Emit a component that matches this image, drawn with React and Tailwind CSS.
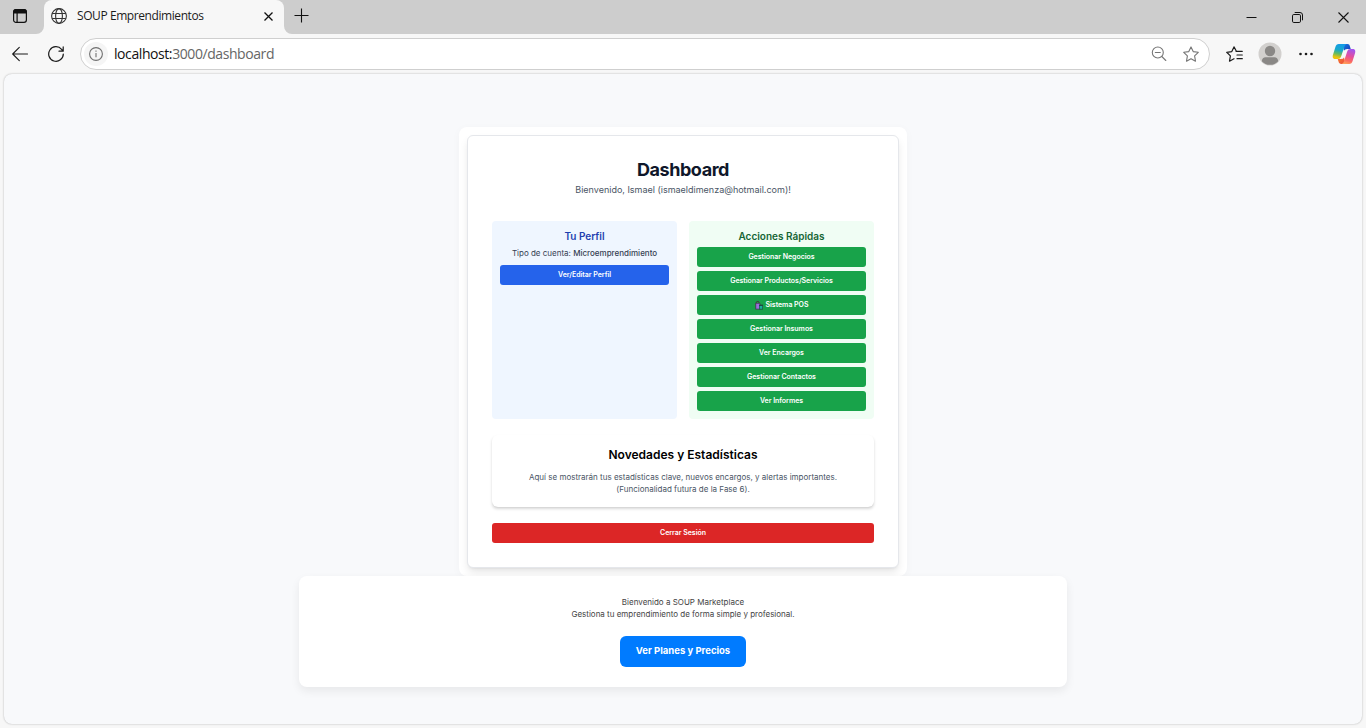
const UI = "font-['Open_Sans','Noto_Sans',sans-serif]";

function TabStrip() {
  return (
    <div className={`flex h-[34px] items-end bg-[#cdcdcd] ${UI}`}>
      <div className="flex h-[34px] w-11 items-center justify-center rounded-br-lg bg-[#cdcdcd]">
        <svg className="-ml-1 -mt-0.5" width="16" height="16" viewBox="0 0 16 16" fill="none" stroke="#111" strokeWidth="1.2">
          <rect x="1.6" y="1.6" width="12.8" height="12.8" rx="2.4" />
          <path d="M1.6 5V4a2.4 2.4 0 0 1 2.4-2.4h8A2.4 2.4 0 0 1 14.4 4v1z" fill="#111" />
          <path d="M5.1 5v9.4" />
        </svg>
      </div>
      <div className="relative flex h-[34px] w-60 items-center rounded-t-lg bg-[#f7f7f7] pl-[7px] pr-[10px]">
        <svg className="absolute -left-2 bottom-0" width="8" height="8" viewBox="0 0 8 8"><path d="M8 0v8H0a8 8 0 0 0 8-8z" fill="#f7f7f7" /></svg>
        <svg className="absolute -right-2 bottom-0" width="8" height="8" viewBox="0 0 8 8"><path d="M0 0v8h8a8 8 0 0 1-8-8z" fill="#f7f7f7" /></svg>
        <svg className="-mt-0.5" width="16" height="16" viewBox="0 0 16 16" fill="none" stroke="#333" strokeWidth="1.100">
          <circle cx="8" cy="8" r="7.4" />
          <ellipse cx="8" cy="8" rx="3.4" ry="7.4" />
          <path d="M1.2 5.5h13.6M1.2 10.5h13.6" />
        </svg>
        <span className="ml-[10px] -mt-[3px] whitespace-nowrap text-[12px] leading-4 tracking-[-0.42px] text-[#1b1b1b]">SOUP Emprendimientos</span>
        <svg className="-mt-px ml-auto" width="11" height="11" viewBox="0 0 11 11" fill="none" stroke="#111" strokeWidth="1.3"><path d="M1.5 1.5l8 8M9.500 1.500l-8 8" /></svg>
      </div>
      <svg className="mb-[11px] ml-[10px]" width="15" height="15" viewBox="0 0 15 15" fill="none" stroke="#111" strokeWidth="1.1"><path d="M7.5 .5v14M.5 7.500h14" /></svg>
      <div className="ml-auto flex h-[33px]">
        <div className="flex w-[46px] items-center justify-center"><svg width="11" height="11" viewBox="0 0 11 11" stroke="#111"><path d="M.5 5.500h10" /></svg></div>
        <div className="flex w-[46px] items-center justify-center">
          <svg width="11" height="11" viewBox="0 0 11 11" fill="none" stroke="#111"><rect x=".5" y="2.500" width="8" height="8" rx="1.300" /><path d="M2.700 .5h5.300a2.500 2.500 0 0 1 2.500 2.500v5.300" /></svg>
        </div>
        <div className="flex w-[46px] items-center justify-center"><svg width="11" height="11" viewBox="0 0 11 11" stroke="#111" strokeWidth="1.1"><path d="M.5 .5l10 10M10.500 .5l-10 10" /></svg></div>
      </div>
    </div>
  );
}

function Copilot() {
  return (
    <svg width="24" height="22" viewBox="0 0 24 22">
      <defs>
        <linearGradient id="cpLeft" x1="0.5" y1="0" x2="0.3" y2="1">
          <stop offset="0" stopColor="#159be8" /><stop offset=".4" stopColor="#18a9c9" /><stop offset=".65" stopColor="#63ba61" /><stop offset=".9" stopColor="#edc30b" />
        </linearGradient>
        <linearGradient id="cpRight" x1="0.6" y1="0" x2="0.3" y2="1">
          <stop offset="0" stopColor="#a455ee" /><stop offset=".45" stopColor="#e54e9c" /><stop offset=".75" stopColor="#fb6a62" /><stop offset="1" stopColor="#ffa35a" />
        </linearGradient>
        <linearGradient id="cpTop" x1="0" y1="0" x2="1" y2="1"><stop offset="0" stopColor="#1b76e4" /><stop offset="1" stopColor="#153fb5" /></linearGradient>
        <linearGradient id="cpBottom" x1="0" y1="0" x2="1" y2="1"><stop offset="0" stopColor="#f9832b" /><stop offset="1" stopColor="#e8463f" /></linearGradient>
      </defs>
      <path d="M10.500 1h5c1.500 0 2 .9 2.400 2.200l.8 2.800h-3.400c-1.800 0-2.700.8-3.200 2.200z" fill="url(#cpTop)" />
      <path d="M13.500 21H9.200c-1.600 0-2.200-.9-2.600-2.200l-.9-2.800h3c1.800 0 2.700-.8 3.200-2.200z" fill="url(#cpBottom)" />
      <path d="M6.800 1H15c-1.500.3-2.100 1.300-2.600 2.700L9.100 13.500c-.6 1.700-1.500 2.500-3.300 2.500H3.400C.8 16 .3 14.100 1 11.700L3.400 3.900C4 2 5 1 6.800 1z" fill="url(#cpLeft)" />
      <path d="M17.200 21H9.600c1.300-.3 1.900-1.300 2.400-2.700l3.200-9.800C15.800 6.800 16.700 6 18.500 6h2.100c2.600 0 3.100 1.900 2.400 4.300l-2.400 7.800c-.6 1.900-1.600 2.900-3.400 2.900z" fill="url(#cpRight)" />
      <path d="M12.700 6.900h1.700c-.3.400-.5.900-.7 1.400l-2 6.100c-.2.500-.4.900-.7 1.200H9.300c.5-.5.800-1.100 1-1.800l1.700-5.400c.2-.6.400-1.100.7-1.500z" fill="#f7f7f7" />
    </svg>
  );
}

function Toolbar() {
  return (
    <div className={`flex h-10 items-center bg-[#f7f7f7] ${UI}`}>
      <svg className="ml-3" width="16" height="16" viewBox="0 0 16 16" fill="none" stroke="#1b1b1b" strokeWidth="1.1" strokeLinecap="round" strokeLinejoin="round"><path d="M15.500 8H.7M7.300 1.300L.7 8l6.600 6.700" /></svg>
      <svg className="ml-5" width="16" height="16" viewBox="0 0 16 16" fill="none" stroke="#1b1b1b" strokeWidth="1.2" strokeLinecap="round" strokeLinejoin="round"><path d="M15.300 8A7.300 7.300 0 1 1 13.600 3.300L15 5M15.200 .9V5.200H11" /></svg>
      <div className="ml-4 flex h-8 w-[1130px] items-center rounded-full border border-[#cfcfcf] bg-white pl-[3px] pr-[10px]">
        <div className="flex size-6 items-center justify-center rounded-full bg-[#f5f5f5]">
          <svg width="14" height="14" viewBox="0 0 14 14" fill="none" stroke="#707070" strokeWidth="1.1"><circle cx="7" cy="7" r="6.400" /><path d="M7 6v4.200M7 3.500v1.300" /></svg>
        </div>
        <span className="ml-[6px] text-[14px] leading-5 tracking-[-0.42px] text-[#666]"><span className="text-[#111]">localhost:</span>3000/dashboard</span>
        <svg className="ml-auto" width="16" height="16" viewBox="0 0 16 16" fill="none" stroke="#767676" strokeWidth="1.1" strokeLinecap="round"><circle cx="6.800" cy="6.500" r="5.500" /><path d="M4.300 6.500h5M10.800 10.500l4 4" /></svg>
        <svg className="ml-4" width="16" height="16" viewBox="0 0 16 16" fill="none" stroke="#767676" strokeWidth="1.1" strokeLinejoin="round"><path d="M8 .9l2.200 4.700 5.100.7-3.700 3.600.9 5.300L8 12.700l-4.500 2.500.9-5.300L.7 6.300l5.100-.7z" /></svg>
      </div>
      <svg className="ml-4" width="17" height="16" viewBox="0 0 17 16" fill="none" stroke="#1b1b1b" strokeWidth="1.200" strokeLinejoin="round" strokeLinecap="round"><path d="M10.400 5.300L8 .9 5.800 5.600l-5.100.7 3.700 3.600-.9 5.300L8 12.700M10 5.300h6.300M11 9h5.300M11 12.700h5.300" /></svg>
      <svg className="ml-[15px]" width="24" height="24" viewBox="0 0 24 24">
        <circle cx="12" cy="12" r="11.500" fill="#d2d0ce" />
        <circle cx="12" cy="9" r="5.200" fill="#8a8886" />
        <path d="M3.800 19.200c.2-2.600 1.700-3.900 3.700-3.900h9c2 0 3.500 1.300 3.700 3.900a11 11 0 0 1-16.400 0z" fill="#8a8886" />
      </svg>
      <svg className="ml-[17px]" width="14" height="4" viewBox="0 0 14 4" fill="#1b1b1b"><circle cx="1.500" cy="2" r="1.300" /><circle cx="7" cy="2" r="1.300" /><circle cx="12.500" cy="2" r="1.300" /></svg>
      <div className="ml-[19px]"><Copilot /></div>
    </div>
  );
}

function ShoppingBags() {
  return (
    <svg className="mr-[3px]" width="8" height="9" viewBox="0 0 8 9">
      <path d="M1.300 2.500V1.200C1.300.2 4 .2 4 1.200v1.300" fill="none" stroke="#4a2b36" strokeWidth=".9" />
      <path d="M.3 2h5v6.500h-5z" fill="#4b3857" />
      <path d="M1.200 2.700h3.500v5H1.200z" fill="#9a70dc" />
      <path d="M4 3.600h4v4.900H4z" fill="#1d4a40" />
      <path d="M4.600 5h2.700v2.800H4.600z" fill="#18b09a" />
    </svg>
  );
}

const actions = [
  "Gestionar Negocios",
  "Gestionar Productos/Servicios",
  "Sistema POS",
  "Gestionar Insumos",
  "Ver Encargos",
  "Gestionar Contactos",
  "Ver Informes",
];

const button = "flex h-5 w-full items-center justify-center rounded-[3px] text-[7px] font-semibold leading-[10px] tracking-[-0.03px] text-white";

function DashboardCard() {
  return (
    <div className="w-[448px] rounded-lg bg-white p-2 shadow-[0_2px_10px_rgba(0,0,0,0.03)]">
      <div className="rounded-md border border-gray-200 bg-white p-6 text-center shadow-[0_5px_8px_-1px_rgba(0,0,0,0.1),0_2px_3px_-2px_rgba(0,0,0,0.1)]">
        <h1 className="text-[18px] font-bold leading-5 tracking-[-0.45px] text-[#0f172a]">Dashboard</h1>
        <p className="mt-[3px] text-[9px] leading-[14px] text-gray-600">Bienvenido, Ismael (ismaeldimenza@hotmail.com)!</p>
        <div className="mt-6 grid grid-cols-2 gap-3">
          <section className="rounded bg-[#eff6ff] p-2">
            <h2 className="mb-1 text-[10px] font-semibold leading-[14px] text-[#1e40af]">Tu Perfil</h2>
            <p className="mb-1.5 text-[8px] leading-3 text-gray-700">Tipo de cuenta: <span className="font-medium">Microemprendimiento</span></p>
            <button className={`${button} bg-[#2563eb]`}>Ver/Editar Perfil</button>
          </section>
          <section className="rounded bg-[#f0fdf4] p-2">
            <h2 className="mb-1 text-[10px] font-semibold leading-[14px] text-[#166534]">Acciones Rápidas</h2>
            <div className="flex flex-col gap-1">
              {actions.map((a) => (
                <button key={a} className={`${button} bg-[#18a34a]`}>
                  {a === "Sistema POS" && <ShoppingBags />}
                  {a}
                </button>
              ))}
            </div>
          </section>
        </div>
        <section className="mt-4 rounded-md bg-white p-3 shadow-[0_2px_3px_-0.5px_rgba(0,0,0,0.15),0_1px_2px_-1px_rgba(0,0,0,0.12)]">
          <h2 className="mb-2 text-[12px] font-semibold leading-4 text-black">Novedades y Estadísticas</h2>
          <p className="text-[8px] leading-3 text-gray-600">Aquí se mostrarán tus estadísticas clave, nuevos encargos, y alertas importantes.<br />(Funcionalidad futura de la Fase 6).</p>
        </section>
        <button className={`${button} mt-4 bg-[#dc2626]`}>Cerrar Sesión</button>
      </div>
    </div>
  );
}

export default function App() {
  return (
    <div className="flex h-[728px] w-[1366px] flex-col overflow-hidden bg-[#f7f7f7]">
      <TabStrip />
      <Toolbar />
      <main className="mx-1 flex h-[650px] flex-col items-center rounded-lg bg-[#f8f9fb] pt-[53px] font-['Inter',sans-serif] shadow-[0_0_2px_rgba(0,0,0,0.3)]">
        <DashboardCard />
        <div className="flex w-[768px] flex-col items-center rounded-lg bg-white p-5 text-center shadow-[0_4px_10px_rgba(0,0,0,0.07)]">
          <p className="text-[8px] leading-3 text-[#444]">Bienvenido a SOUP Marketplace<br />Gestiona tu emprendimiento de forma simple y profesional.</p>
          <button className="mt-4 h-[31px] w-[126px] rounded-md bg-[#007bff] pb-0.5 text-[9.5px] font-bold leading-[14px] text-white">Ver Planes y Precios</button>
        </div>
      </main>
    </div>
  );
}
